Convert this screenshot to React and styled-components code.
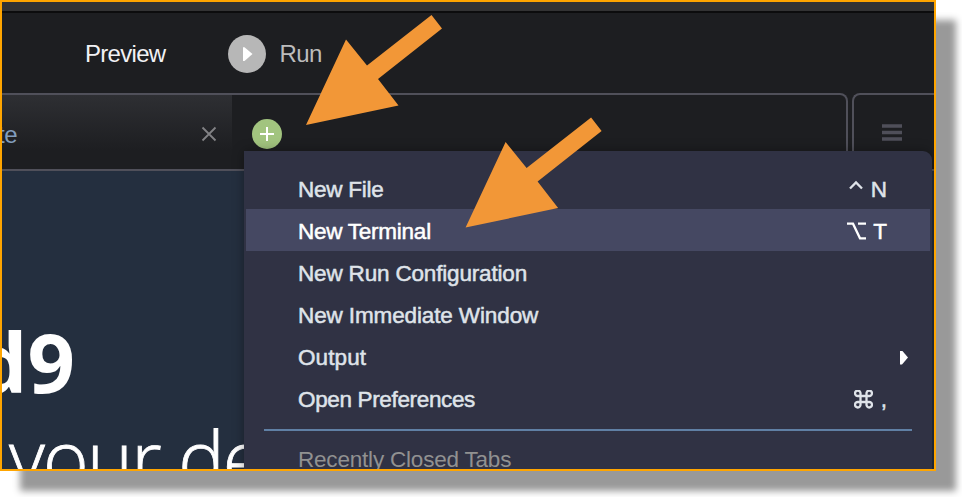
import React from "react";
import styled, { createGlobalStyle } from "styled-components";

const GlobalStyle = createGlobalStyle`
  * { box-sizing: border-box; }
  body { margin: 0; height: 100vh; background: #fff; overflow: hidden; font-family: "Liberation Sans", Arial, sans-serif; }
`;

const Frame = styled.div`
  position: relative;
  width: 936px;
  height: 471px;
  border: 2px solid #ffa500;
  background: #1d1e21;
  overflow: hidden;
  display: flex;
  flex-direction: column;
`;
const Shadowed = styled.main`
  width: 936px;
  height: 471px;
  box-shadow: 20px 20px 7px #999;
`;
const WindowEdge = styled.div`
  flex: none;
  height: 11px;
  background: #333334;
  border-bottom: 2px solid #0c0c0d;
`;
const Toolbar = styled.header`
  flex: none;
  height: 80px;
  display: flex;
  align-items: center;
  padding-left: 83px;
`;
const ToolLabel = styled.span`
  font-size: 24px;
  line-height: 30px;
  padding-top: 1px;
  white-space: nowrap;
  letter-spacing: ${(p) => p.$tracking}px;
  color: ${(p) => p.$color};
`;
const RunButton = styled.div`
  display: flex;
  align-items: center;
  gap: 13px;
  margin-left: 63px;
`;
const PlayDisc = styled.span`
  width: 38px;
  height: 38px;
  border-radius: 50%;
  background: #b7b7b7;
  display: grid;
  margin-top: 2px;
  svg { display: block; }
`;
const TabStrip = styled.div`
  flex: none;
  height: 78px;
  display: flex;
  gap: 4px;
`;
const Pane = styled.div`
  display: flex;
  height: 78px;
  border: 2px solid #50505a;
  ${(p) => (p.$side === "left"
    ? "width: 846px; border-left: 0; border-top-right-radius: 8px;"
    : "flex: 1; border-right: 0; border-top-left-radius: 8px; justify-content: flex-end; padding: 29px 32px 0 0;")}
`;
const Tab = styled.div`
  width: 230px;
  display: flex;
  align-items: center;
  justify-content: space-between;
  padding: 4px 15px 0 0;
  background: linear-gradient(#2e2f33, #1d1e21 75%);
`;
const TabTitle = styled.span`
  margin-left: -4px;
  padding-top: 2px;
  font-size: 24px;
  letter-spacing: -0.5px;
  color: #829dbd;
`;
const AddDisc = styled.span`
  width: 30px;
  height: 30px;
  margin: 24px 0 0 20px;
  border-radius: 50%;
  background: #a2c47f;
  display: grid;
  place-items: center;
`;
const Editor = styled.section`
  flex: 1;
  background: #242f3f;
  color: #fff;
  padding-top: 130px;
  font-family: "Open Sans", sans-serif;
  white-space: nowrap;
`;
const Headline = styled.div`
  height: 106px;
  margin-left: -27px;
  font-size: 83px;
  line-height: 120px;
  font-weight: 700;
`;
const Tagline = styled.div`
  margin-left: 7px;
  font-size: 78px;
  line-height: 100px;
  font-weight: 300;
  letter-spacing: -1.8px;
  -webkit-text-stroke: 0.8px currentColor;
`;
const Menu = styled.nav`
  position: absolute;
  left: 242px;
  top: 149px;
  width: 688px;
  height: 330px;
  padding: 16px 2px 0;
  background: #303244;
  border-top-right-radius: 9px;
  box-shadow: 0 0 12px rgba(0, 0, 0, 0.35);
`;
const MenuItem = styled.div`
  height: 42px;
  display: flex;
  align-items: center;
  justify-content: space-between;
  padding: 3px 43px 0 52px;
  font-size: 22.5px;
  white-space: nowrap;
  color: ${(p) => (p.$active ? "#fff" : p.$muted ? "#919191" : "#dfe3e9")};
  background: ${(p) => (p.$active ? "#454862" : "transparent")};
  -webkit-text-stroke: ${(p) => (p.$muted ? 0 : 0.5)}px currentColor;
`;
const ItemLabel = styled.span`
  letter-spacing: ${(p) => p.$tracking}px;
`;
const Shortcut = styled.span`
  display: flex;
  align-items: center;
  gap: ${(p) => p.$gap}px;
  svg { display: block; }
`;
const SubmenuMark = styled.span`
  width: 8px;
  height: 14px;
  margin: 0 -21px 0 0;
  background: #fff;
  clip-path: polygon(0 0, 25% 0, 100% 50%, 25% 100%, 0 100%);
`;
const Divider = styled.hr`
  height: 2px;
  margin: 10px 18px 6px;
  border: 0;
  background: #6080a5;
`;
const Annotations = styled.svg`
  position: absolute;
  left: -2px;
  top: -2px;
  width: 936px;
  height: 471px;
  pointer-events: none;
`;

const KeyIcon = ({ name }) => {
  const p = { fill: "none", stroke: "currentColor", strokeWidth: 2.3 };
  if (name === "control")
    return <svg width="14" height="20" viewBox="0 0 14 20"><path {...p} d="M1 8.5 7 2.5l6 6" /></svg>;
  if (name === "option")
    return <svg width="19" height="20" viewBox="0 0 19 20"><path {...p} d="M0 1.7h6l7 14.6h6M11 1.7h8" /></svg>;
  return (
    <svg width="19" height="20" viewBox="0 0 19 20">
      <path {...p} d="M6.5 6V3.5A2.75 2.75 0 1 0 4 6h11A2.75 2.75 0 1 0 12.5 3.5v11A2.75 2.75 0 1 0 15 12H4a2.75 2.75 0 1 0 2.5 2.5Z" />
    </svg>
  );
};

const items = [
  { label: "New File", icon: "control", keyName: "N", tracking: -0.25, gap: 8 },
  { label: "New Terminal", icon: "option", keyName: "T", tracking: -0.25, gap: 7, active: true },
  { label: "New Run Configuration", tracking: -0.17 },
  { label: "New Immediate Window", tracking: -0.12 },
  { label: "Output", submenu: true, tracking: 0.1 },
  { label: "Open Preferences", icon: "command", keyName: ",", tracking: -0.35, gap: 8 },
];

export default function App() {
  return (
    <Shadowed>
      <GlobalStyle />
      <Frame>
        <WindowEdge />
        <Toolbar>
          <ToolLabel $color="#f1f1f4" $tracking={-0.7}>Preview</ToolLabel>
          <RunButton>
            <PlayDisc>
              <svg width="38" height="38"><path d="M15 12.2h1.5l8 6.8-8 7H15Z" fill="#fff" /></svg>
            </PlayDisc>
            <ToolLabel $color="#bcbcbc" $tracking={-0.6}>Run</ToolLabel>
          </RunButton>
        </Toolbar>
        <TabStrip>
          <Pane $side="left">
            <Tab>
              <TabTitle>te</TabTitle>
              <svg width="16" height="16"><path d="M1.5 1.5l13 13m0-13l-13 13" stroke="#828285" strokeWidth="1.8" /></svg>
            </Tab>
            <AddDisc>
              <svg width="14" height="14"><path d="M0 7h14M7 0v14" stroke="#fff" strokeWidth="2" /></svg>
            </AddDisc>
          </Pane>
          <Pane $side="right">
            <svg width="20" height="18"><path d="M0 2h20M0 8.5h20M0 15h20" stroke="#4f4f59" strokeWidth="3.4" /></svg>
          </Pane>
        </TabStrip>
        <Editor>
          <Headline>d9</Headline>
          <Tagline>your de</Tagline>
        </Editor>
        <Menu>
          {items.map((it) => (
            <MenuItem key={it.label} $active={it.active}>
              <ItemLabel $tracking={it.tracking}>{it.label}</ItemLabel>
              {it.icon && <Shortcut $gap={it.gap}><KeyIcon name={it.icon} /><span>{it.keyName}</span></Shortcut>}
              {it.submenu && <SubmenuMark />}
            </MenuItem>
          ))}
          <Divider />
          <MenuItem $muted><ItemLabel $tracking={-0.2}>Recently Closed Tabs</ItemLabel></MenuItem>
        </Menu>
        <Annotations viewBox="0 0 936 471">
          <g fill="#f29737">
            <path id="arrow" d="M306 125 346 39.5 367 65.5 431.5 15 442 28.5 378 79 398.5 105.5Z" />
            <use href="#arrow" x="159.6" y="102.5" />
          </g>
        </Annotations>
      </Frame>
    </Shadowed>
  );
}
